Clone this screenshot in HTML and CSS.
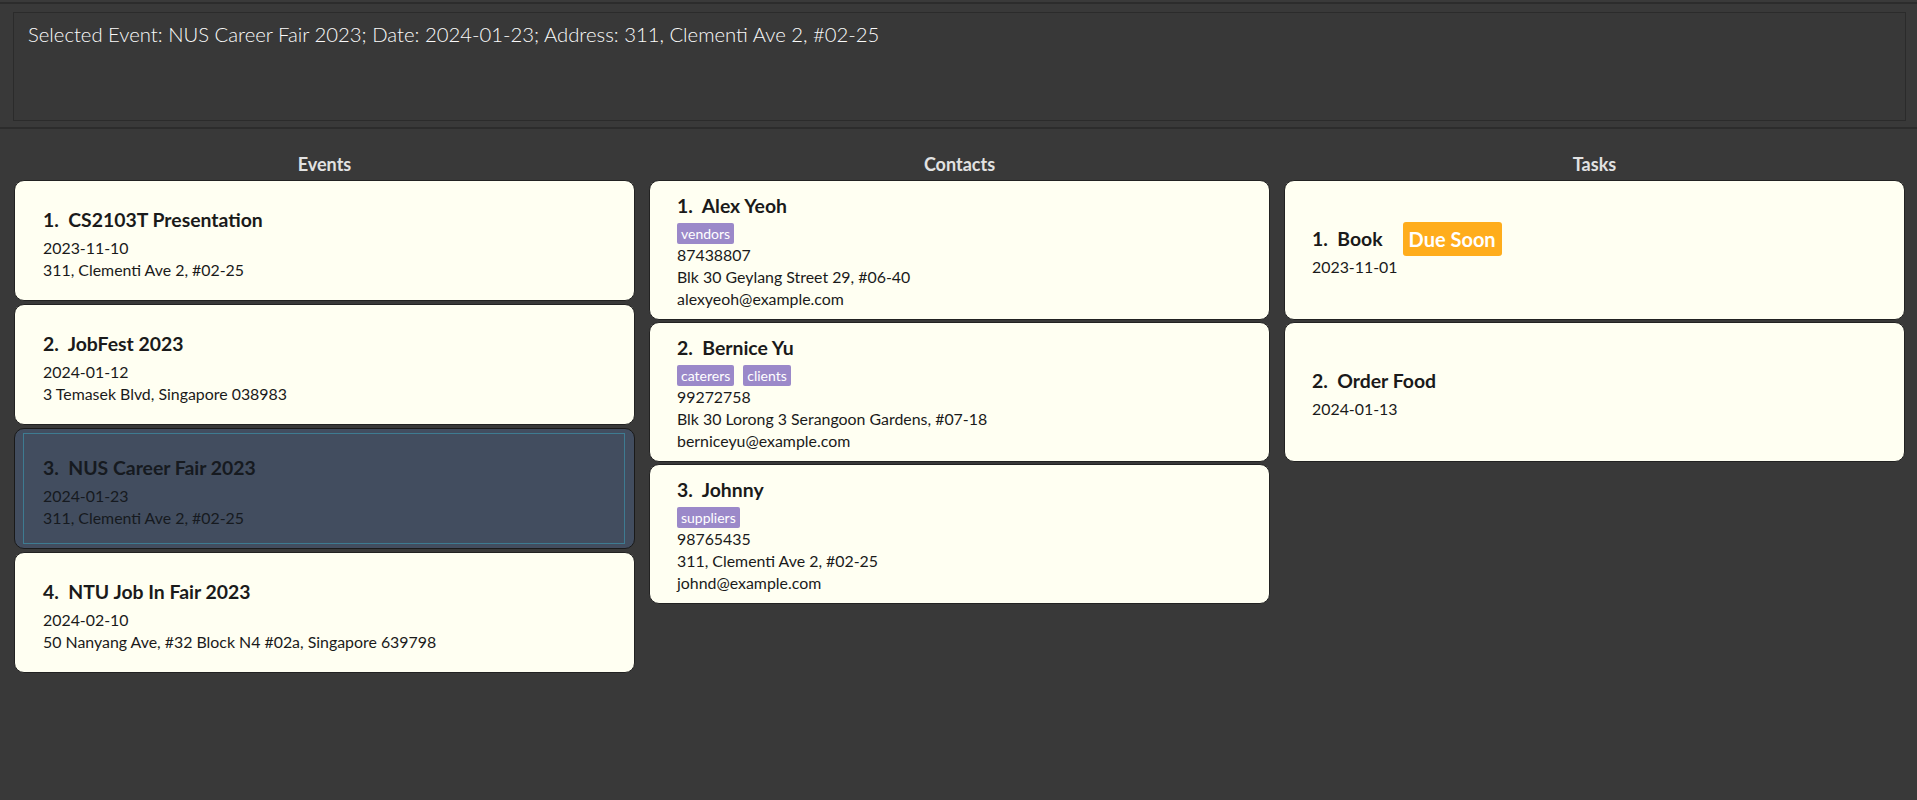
FILE: index.html
```html
<!DOCTYPE html>
<html lang="en">
<head>
<meta charset="utf-8">
<title>Event Manager</title>
<link rel="stylesheet" href="styles.css">
</head>
<body>
<div class="menu-strip"></div>
<section class="result-pane">
  <div class="result-box">
    <p class="result-text">Selected Event: NUS Career Fair 2023; Date: 2024-01-23; Address: 311, Clementi Ave 2, #02-25</p>
  </div>
</section>
<main class="lists">
  <section class="column">
    <h2 class="column-title">Events</h2>
    <div class="card-list event-list">
      <div class="card event-card">
        <div class="card-title">1.  CS2103T Presentation</div>
        <div class="line">2023-11-10</div>
        <div class="line">311, Clementi Ave 2, #02-25</div>
      </div>
      <div class="card event-card">
        <div class="card-title">2.  JobFest 2023</div>
        <div class="line">2024-01-12</div>
        <div class="line">3 Temasek Blvd, Singapore 038983</div>
      </div>
      <div class="card event-card selected">
        <div class="selected-inner">
          <div class="card-title">3.  NUS Career Fair 2023</div>
          <div class="line">2024-01-23</div>
          <div class="line">311, Clementi Ave 2, #02-25</div>
        </div>
      </div>
      <div class="card event-card">
        <div class="card-title">4.  NTU Job In Fair 2023</div>
        <div class="line">2024-02-10</div>
        <div class="line">50 Nanyang Ave, #32 Block N4 #02a, Singapore 639798</div>
      </div>
    </div>
  </section>
  <section class="column">
    <h2 class="column-title">Contacts</h2>
    <div class="card-list contact-list">
      <div class="card contact-card">
        <div class="card-title">1.  Alex Yeoh</div>
        <div class="tags"><span class="tag">vendors</span></div>
        <div class="line">87438807</div>
        <div class="line">Blk 30 Geylang Street 29, #06-40</div>
        <div class="line">alexyeoh@example.com</div>
      </div>
      <div class="card contact-card">
        <div class="card-title">2.  Bernice Yu</div>
        <div class="tags"><span class="tag">caterers</span><span class="tag">clients</span></div>
        <div class="line">99272758</div>
        <div class="line">Blk 30 Lorong 3 Serangoon Gardens, #07-18</div>
        <div class="line">berniceyu@example.com</div>
      </div>
      <div class="card contact-card">
        <div class="card-title">3.  Johnny</div>
        <div class="tags"><span class="tag">suppliers</span></div>
        <div class="line">98765435</div>
        <div class="line">311, Clementi Ave 2, #02-25</div>
        <div class="line">johnd@example.com</div>
      </div>
    </div>
  </section>
  <section class="column">
    <h2 class="column-title">Tasks</h2>
    <div class="card-list task-list">
      <div class="card task-card">
        <div class="task-row">
          <span class="card-title">1.  Book</span>
          <span class="badge">Due Soon</span>
        </div>
        <div class="line">2023-11-01</div>
      </div>
      <div class="card task-card">
        <div class="task-row">
          <span class="card-title">2.  Order Food</span>
        </div>
        <div class="line">2024-01-13</div>
      </div>
    </div>
  </section>
</main>
</body>
</html>
```

FILE: styles.css
```css
html, body {
  margin: 0;
  padding: 0;
}

body {
  width: 1917px;
  height: 800px;
  overflow: hidden;
  background: #393939;
  font-family: "Lato", "Open Sans", sans-serif;
}

.menu-strip {
  height: 2px;
  background: #3a3a3a;
}

.result-pane {
  border-top: 2px solid #2c2c2c;
  border-bottom: 2px solid #2c2c2c;
  padding: 8px 11px 6px 13px;
  background: #393939;
}

.result-box {
  height: 109px;
  box-sizing: border-box;
  border: 1px solid #2b2b2b;
  background: #383838;
  padding: 7px 14px;
}

.result-text {
  margin: 0;
  font-family: "Lato", sans-serif;
  font-weight: 300;
  font-size: 20.3px;
  line-height: 28px;
  color: #fafafa;
}

.lists {
  display: grid;
  grid-template-columns: repeat(3, 1fr);
  column-gap: 14px;
  padding: 0 12px 0 14px;
}

.column {
  display: flex;
  flex-direction: column;
}

.column-title {
  margin: 0;
  padding: 24px 0 4px;
  text-align: center;
  font-family: "Lato", sans-serif;
  font-weight: 700;
  font-size: 18px;
  line-height: 23px;
  color: #e2e2e2;
}

.card-list {
  display: flex;
  flex-direction: column;
}

.event-list {
  gap: 3px;
}

.contact-list,
.task-list {
  gap: 2px;
}

.card {
  box-sizing: border-box;
  background: #fffff2;
  border: 1px solid #222222;
  border-radius: 10px;
  color: #1c1c1c;
}

.card-title {
  font-family: "Lato", sans-serif;
  font-weight: 700;
  font-size: 19.4px;
  line-height: 24px;
  white-space: pre;
  color: #1a1a1a;
}

.line {
  font-family: "Lato", sans-serif;
  font-size: 15.9px;
  line-height: 22px;
  white-space: pre;
  color: #1a1a1a;
}

.event-card {
  height: 121px;
  padding: 27px 28px 0 28px;
}

.event-card .card-title {
  margin-bottom: 5px;
}

.event-card.selected {
  background: #424d5f;
  border-color: #1a1a1a;
  padding: 4px 9px 4px 8px;
}

.selected-inner {
  height: 100%;
  box-sizing: border-box;
  border: 1px solid #3e7b91;
  padding: 22px 19px 0 19px;
}

.event-card.selected .card-title,
.event-card.selected .line {
  color: #161a20;
}

.contact-card {
  height: 140px;
  padding: 13px 27px 0 27px;
}

.contact-card .card-title {
  margin-bottom: 5px;
}

.tags {
  display: flex;
  gap: 9px;
  height: 21px;
}

.tag {
  display: inline-flex;
  align-items: center;
  height: 21px;
  padding: 0 4px;
  border-radius: 2px;
  background: #9b89c9;
  color: #ffffff;
  font-family: "Lato", sans-serif;
  font-size: 14px;
  line-height: 21px;
}

.task-card {
  height: 140px;
  padding: 41px 27px 0 27px;
}

.task-row {
  display: flex;
  align-items: center;
  gap: 20px;
  height: 34px;
}

.badge {
  display: inline-flex;
  align-items: center;
  height: 34px;
  padding: 0 6px;
  border-radius: 3px;
  background: #ffad1c;
  color: #ffffff;
  font-family: "Lato", sans-serif;
  font-weight: 700;
  font-size: 20px;
}
```
